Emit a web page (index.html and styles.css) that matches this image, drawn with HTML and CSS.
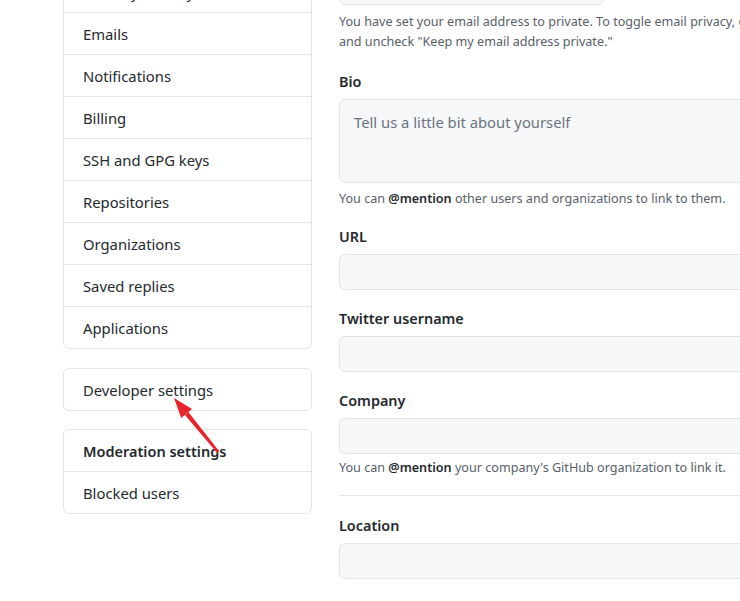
FILE: index.html
```html
<!DOCTYPE html>
<html lang="en">
<head>
<meta charset="utf-8">
<title>Settings</title>
<link rel="stylesheet" href="styles.css">
</head>
<body>
<div class="page">
  <aside class="sidebar">
    <nav class="menu menu-first">
      <a class="menu-item">Security &amp; analysis</a>
      <a class="menu-item">Emails</a>
      <a class="menu-item">Notifications</a>
      <a class="menu-item">Billing</a>
      <a class="menu-item">SSH and GPG keys</a>
      <a class="menu-item">Repositories</a>
      <a class="menu-item">Organizations</a>
      <a class="menu-item">Saved replies</a>
      <a class="menu-item">Applications</a>
    </nav>
    <nav class="menu">
      <a class="menu-item">Developer settings</a>
    </nav>
    <nav class="menu">
      <div class="menu-item menu-heading">Moderation settings</div>
      <a class="menu-item">Blocked users</a>
    </nav>
  </aside>
  <main class="content">
    <div class="select-box"></div>
    <p class="note note-top">You have set your email address to private. To toggle email privacy, go to email settings<br>and uncheck "Keep my email address private."</p>

    <div class="group group-bio">
      <label class="label">Bio</label>
      <div class="textarea">Tell us a little bit about yourself</div>
      <p class="note">You can <strong>@mention</strong> other users and organizations to link to them.</p>
    </div>

    <div class="group group-url">
      <label class="label">URL</label>
      <div class="input"></div>
    </div>

    <div class="group">
      <label class="label">Twitter username</label>
      <div class="input"></div>
    </div>

    <div class="group">
      <label class="label">Company</label>
      <div class="input"></div>
      <p class="note note-company">You can <strong>@mention</strong> your company's GitHub organization to link it.</p>
    </div>

    <hr class="divider">

    <div class="group group-location">
      <label class="label">Location</label>
      <div class="input"></div>
    </div>
  </main>
</div>
<svg class="arrow" width="80" height="80" viewBox="0 0 80 80" aria-hidden="true">
  <polygon points="14,13 21.2,32.9 32,24.1" fill="#e8232b"/>
  <polygon points="24.9,29.9 28.3,27.1 59.2,66.3 57.2,67.9" fill="#e8232b"/>
</svg>
</body>
</html>
```
FILE: styles.css
```css
html, body {
  margin: 0;
  padding: 0;
  background: #ffffff;
  overflow: hidden;
}

body {
  font-family: "Noto Sans", "Open Sans", sans-serif;
  color: #24292e;
  width: 740px;
  height: 601px;
  position: relative;
}

.page {
  display: flex;
  gap: 27px;
  padding-left: 63px;
  width: 1100px;
}

.sidebar {
  width: 249px;
  flex: none;
  display: flex;
  flex-direction: column;
  gap: 19px;
  margin-top: -30px;
}

.menu {
  border: 1px solid #e1e4e8;
  border-radius: 6px;
  display: flex;
  flex-direction: column;
}

.menu-item {
  display: block;
  padding: 11px 19px 9px;
  line-height: 21px;
  font-size: 14.8px;
  color: #24292e;
  border-bottom: 1px solid #e1e4e8;
}

.menu-item:last-child {
  border-bottom: none;
}

.menu-heading {
  font-weight: 600;
  font-size: 14.5px;
}

.sidebar .menu + .menu + .menu {
  margin-top: -1px;
}

.content {
  width: 440px;
  flex: none;
  margin-top: -31px;
}

.select-box {
  width: 263px;
  height: 34px;
  border: 1px solid #e1e4e8;
  border-radius: 6px;
  background: #f6f8fa;
}

.note {
  margin: 0;
  font-size: 12.6px;
  line-height: 20px;
  color: #586069;
  white-space: nowrap;
}

.note strong {
  color: #24292e;
  font-weight: 600;
}

.note-top {
  margin-top: 7px;
}

.group {
  margin-top: 18px;
}

.group-bio {
  margin-top: 19px;
}

.group-url {
  margin-top: 17px;
}

.label {
  display: block;
  font-size: 14.4px;
  font-weight: 600;
  line-height: 22px;
  margin-bottom: 6px;
}

.textarea {
  box-sizing: border-box;
  height: 84px;
  padding: 10px 14px;
  border: 1px solid #e1e4e8;
  border-radius: 6px;
  background: #f6f8fa;
  font-size: 14.8px;
  line-height: 24px;
  color: #6a737d;
}

.group-bio .note {
  margin-top: 6px;
}

.input {
  box-sizing: border-box;
  height: 36px;
  border: 1px solid #e1e4e8;
  border-radius: 6px;
  background: #f6f8fa;
}

.note-company {
  margin-top: 4px;
}

.divider {
  margin: 17px 0 0;
  border: none;
  border-top: 1px solid #e1e4e8;
  height: 0;
}

.group-location {
  margin-top: 19px;
}

.arrow {
  position: absolute;
  left: 160px;
  top: 385px;
}
```
